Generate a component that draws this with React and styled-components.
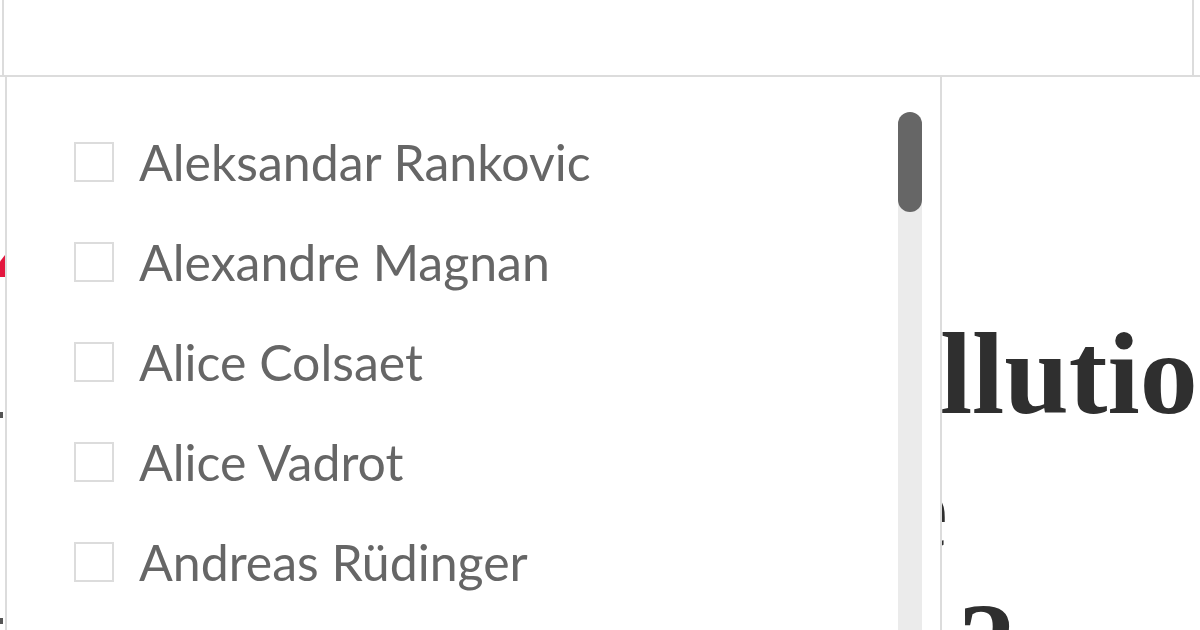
import React from "react";
import styled, { createGlobalStyle } from "styled-components";

const GlobalStyle = createGlobalStyle`
  html, body { margin: 0; padding: 0; background: #fff; }
  body { overflow: hidden; }
  * { box-sizing: border-box; }
`;

const Page = styled.div`
  position: relative;
  width: 1200px;
  height: 630px;
  overflow: hidden;
  background: #fff;
`;

const SearchRow = styled.div`
  height: 77px;
  border-bottom: 2px solid #dcdcdc;
  padding-left: 2px;
`;

const SearchField = styled.div`
  width: 1192px;
  height: 100%;
  border-left: 2px solid #dcdcdc;
  border-right: 2px solid #dcdcdc;
`;

const Content = styled.div`
  display: flex;
  height: 553px;
`;

const Gutter = styled.div`
  width: 5px;
  flex: none;
  display: flex;
  flex-direction: column;
`;

const RedMark = styled.div`
  margin-top: 178px;
  width: 5px;
  height: 22px;
  background: #e3163e;
  clip-path: polygon(0 30%, 100% 0, 100% 100%, 0 100%);
`;

const Tick = styled.div`
  margin-top: ${(p) => p.$gap}px;
  width: 3px;
  height: 6px;
  background: #555;
`;

const Article = styled.div`
  flex: 1;
  padding-top: 230px;
`;

const Heading = styled.h1`
  margin: 0;
  font-family: "Liberation Serif", "DejaVu Serif", serif;
  font-weight: 700;
  font-size: 116px;
  line-height: 135px;
  color: #2f2f2f;
  white-space: nowrap;
`;

const HeadingLine = styled.span`
  display: block;
  margin-left: ${(p) => p.$indent}px;
`;

const Dropdown = styled.div`
  position: absolute;
  top: 77px;
  left: 5px;
  width: 937px;
  height: 560px;
  background: #fff;
  border-left: 2px solid #dcdcdc;
  border-right: 2px solid #dcdcdc;
  display: flex;
  padding-top: 35px;
`;

const List = styled.ul`
  list-style: none;
  margin: 0;
  padding: 0 0 0 67px;
  flex: 1;
`;

const Option = styled.li`
  height: 100px;
  display: flex;
  align-items: center;
  gap: 25px;
  font-family: Lato, "Open Sans", sans-serif;
  font-size: 50px;
  color: #666;
`;

const Box = styled.span`
  width: 40px;
  height: 40px;
  flex: none;
  border: 2px solid #dcdcdc;
  background: #fff;
`;

const Track = styled.div`
  width: 24px;
  margin-right: 18px;
  background: #ebebeb;
  border-radius: 12px 12px 0 0;
`;

const Thumb = styled.div`
  height: 100px;
  border-radius: 12px;
  background: #666;
`;

const names = [
  "Aleksandar Rankovic",
  "Alexandre Magnan",
  "Alice Colsaet",
  "Alice Vadrot",
  "Andreas Rüdinger",
  "Anne-Laure Barral",
];

export default function App() {
  return (
    <>
      <GlobalStyle />
      <Page>
        <SearchRow>
          <SearchField />
        </SearchRow>
        <Content>
          <Gutter>
            <RedMark />
            <Tick $gap={135} />
            <Tick $gap={200} />
          </Gutter>
          <Article>
            <Heading>
              <HeadingLine $indent={648}>La pollution</HeadingLine>
              <HeadingLine $indent={410}>de l'air tue</HeadingLine>
              <HeadingLine $indent={420}>un danger ?</HeadingLine>
            </Heading>
          </Article>
        </Content>
        <Dropdown>
          <List>
            {names.map((n) => (
              <Option key={n}>
                <Box />
                {n}
              </Option>
            ))}
          </List>
          <Track>
            <Thumb />
          </Track>
        </Dropdown>
      </Page>
    </>
  );
}
